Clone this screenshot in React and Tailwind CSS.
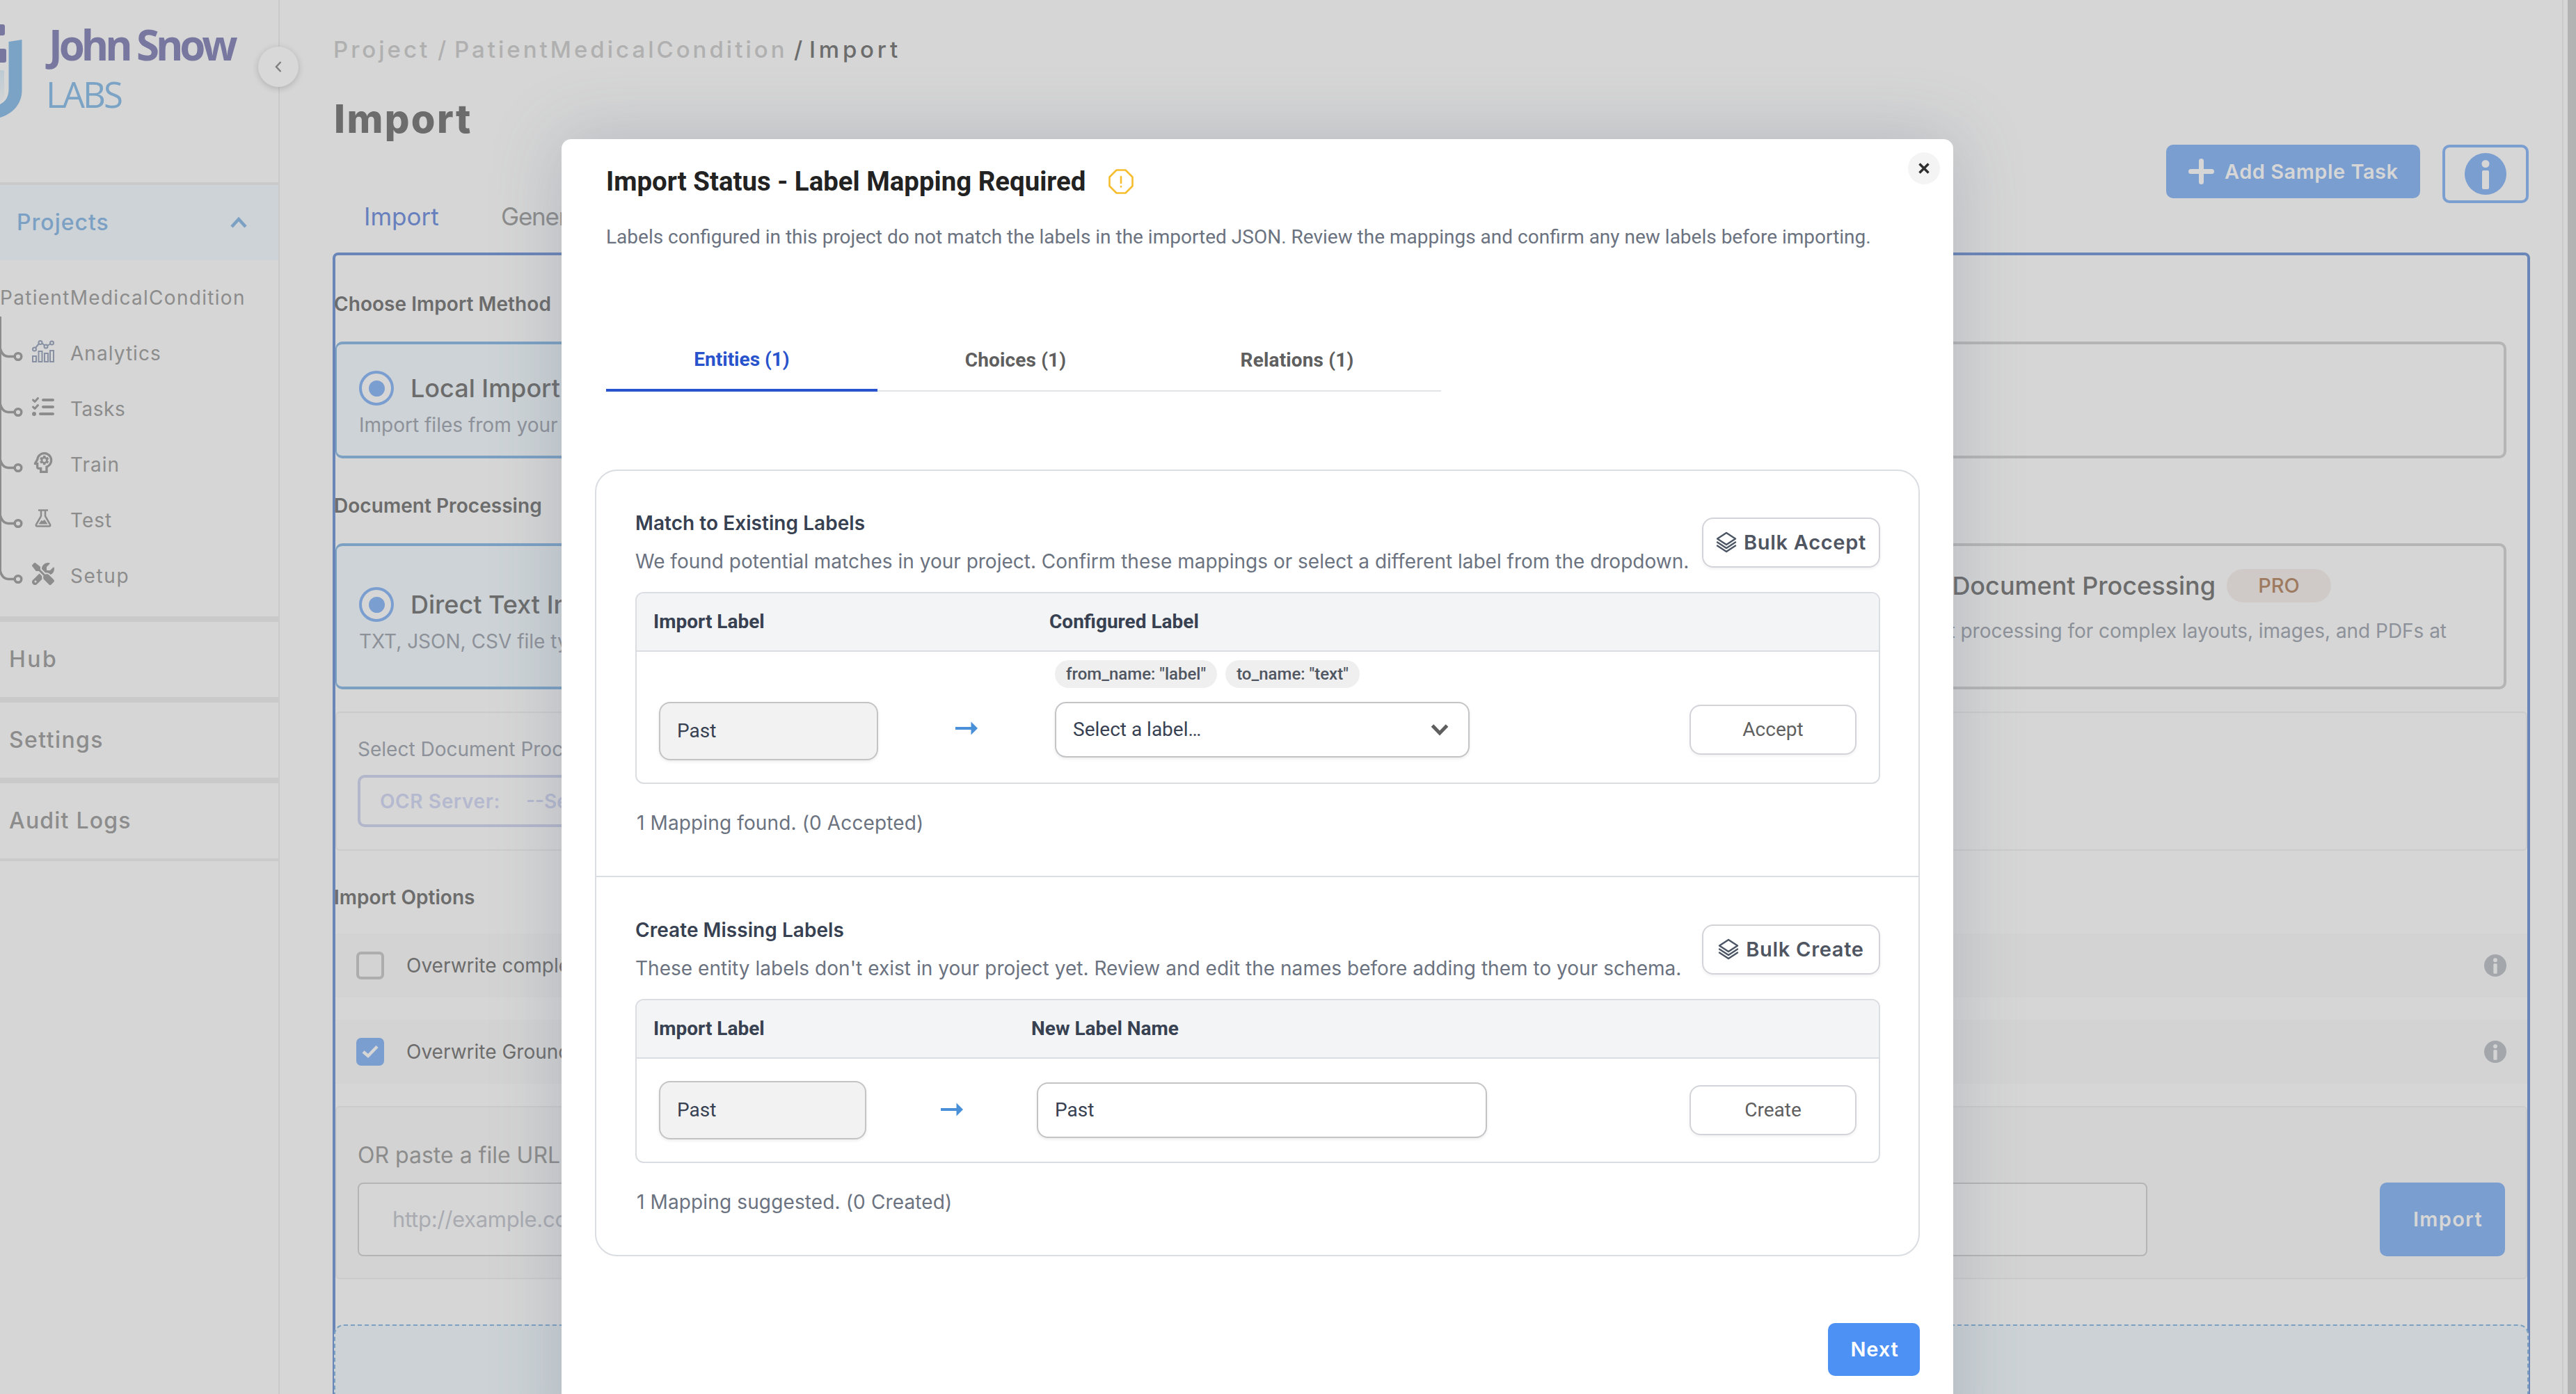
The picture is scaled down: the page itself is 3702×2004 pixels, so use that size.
import React from "react";
import clsx from "clsx";
import { FaListCheck, FaScrewdriverWrench } from "react-icons/fa6";
import { MdOutlinePsychology } from "react-icons/md";

/**
 * Import page with the "Label Mapping Required" dialog open.
 * Everything behind the dialog uses the dimmed palette.
 */

/* ---------- icons ---------- */

function AnalyticsIcon() {
  return (
    <svg viewBox="0 0 32 32" className="h-8 w-8" fill="none" stroke="#8791a3" strokeWidth="2">
      <path d="M5 11 10 5M14 4l4 3.500M22 8l5-3" />
      <circle cx="3.500" cy="13" r="2.500" />
      <circle cx="12" cy="3.500" r="2.500" />
      <circle cx="20" cy="9" r="2.500" />
      <circle cx="28.500" cy="4" r="2.500" />
      <rect x="1" y="23" width="5" height="8" />
      <rect x="9.500" y="16" width="5" height="15" />
      <rect x="18" y="19" width="5" height="12" />
      <rect x="26" y="15" width="5" height="16" />
    </svg>
  );
}

function FlaskIcon() {
  return (
    <svg viewBox="0 0 26 26" className="h-[26px] w-[26px]" fill="none" stroke="#8c8c8c" strokeWidth="2.500">
      <path d="M6 1.500h14" />
      <path d="M10 2v8L3 22q-1 2.500 1.500 2.500h17Q24 24.500 23 22L16 10V2" />
      <path d="M6.500 21.500 10.500 16l2 1 2.500-2 4.500 6.500z" fill="#8c8c8c" stroke="none" />
    </svg>
  );
}

function InfoIcon({ className, hole }) {
  return (
    <svg viewBox="0 0 60 60" className={className}>
      <circle cx="30" cy="30" r="30" fill="currentColor" />
      <circle cx="30" cy="15.500" r="5.500" fill={hole} />
      <rect x="25" y="25" width="10" height="27" rx="2" fill={hole} />
    </svg>
  );
}

function StackIcon() {
  return (
    <svg viewBox="0 0 30 32" className="h-8 w-[30px]" fill="none" stroke="#4b5563" strokeWidth="2.400" strokeLinejoin="round" strokeLinecap="round">
      <path d="M15 2 28 10.500 15 19 2 10.500z" />
      <path d="m2 15.500 13 8.500 13-8.500" />
      <path d="m2 20.500 13 8.500 13-8.500" />
    </svg>
  );
}

function ArrowIcon({ className }) {
  return (
    <svg viewBox="0 0 32 20" className={clsx("h-5 w-8 shrink-0", className)} fill="#4a90d9">
      <rect x="0" y="8" width="24" height="4" />
      <path d="M22.500 0.500 32 10l-9.500 9.500z" />
    </svg>
  );
}

function WarningIcon() {
  return (
    <svg viewBox="0 0 36 36" className="h-9 w-9" fill="none" stroke="#f6bd2e" strokeWidth="2.600" strokeLinejoin="round" strokeLinecap="round">
      <path d="M11.500 1.500h13l10 10v13l-10 10h-13l-10-10v-13z" />
      <path d="M18 11v9M18 25v.5" />
    </svg>
  );
}

/* ---------- sidebar ---------- */

const PROJECT_LINKS = [
  { label: "Analytics", tracking: "tracking-[1.05px]", icon: <AnalyticsIcon /> },
  { label: "Tasks", tracking: "tracking-[0.5px]", icon: <FaListCheck className="h-8 w-8" /> },
  { label: "Train", tracking: "tracking-[1px]", icon: <MdOutlinePsychology className="h-10 w-10" /> },
  { label: "Test", tracking: "tracking-[1px]", icon: <FlaskIcon /> },
  { label: "Setup", tracking: "tracking-[1.6px]", icon: <FaScrewdriverWrench className="h-8 w-8" /> },
];

function Logo() {
  return (
    <div className="flex h-[266px] border-b-4 border-[#cacaca]">
      <svg viewBox="0 0 66 200" className="h-[200px] w-[66px] shrink-0">
        <defs>
          <linearGradient id="logoFade" x1="0" y1="0" x2="0" y2="1">
            <stop offset="0" stopColor="#bccad3" />
            <stop offset="1" stopColor="#d3d5d6" />
          </linearGradient>
        </defs>
        <path d="M0 35h4q3 0 3 3v10q0 3-3 3H0zM0 70h6q3 0 3 3v14q0 3-3 3H0z" fill="#7777a0" />
        <path d="M0 101h6v34q0 8-6 13z" fill="url(#logoFade)" />
        <path d="M12.500 60 31.500 57v73c0 20-14 34-31.500 39v-19c8-4 12.500-11 12.500-22z" fill="#7ba3c5" />
      </svg>
      <div className="pt-[34px] font-['Open_Sans',sans-serif] leading-[60px] whitespace-nowrap">
        <div className="pl-[4px] text-[60px] font-bold tracking-[-5.1px] text-[#7777a0]">John Snow</div>
        <div className="mt-[11px] text-[51px] tracking-[-2.9px] text-[#7ba3c5]">LABS</div>
      </div>
    </div>
  );
}

function TreeBranch({ last }) {
  return (
    <svg viewBox="0 0 36 80" className="h-20 w-9 shrink-0 overflow-visible" fill="none" stroke="#8c8c8c" strokeWidth="3.500">
      <path d={last ? "M0.500 -13V34" : "M0.500 -13V80"} strokeWidth="3" />
      <path d="M0 32Q3 44.500 12 44.500H21" />
      <circle cx="26" cy="44.500" r="4.800" />
    </svg>
  );
}

function SidebarItem({ label, tracking, last }) {
  return (
    <div className={clsx("border-[#cacaca] text-[32px] font-medium", last ? "border-b-4" : "border-b-8")}>
      <div className={clsx("flex h-[108px] items-center pl-[13px]", tracking)}>{label}</div>
    </div>
  );
}

function Sidebar() {
  return (
    <aside className="relative w-[402px] shrink-0 border-r-2 border-[#cacaca] text-[#8c8c8c]">
      <Logo />
      <button className="absolute top-[67px] left-[371px] flex h-[58px] w-[58px] items-center justify-center rounded-full bg-[#d8d8d8] shadow-[0_2px_10px_rgba(0,0,0,0.18)]">
        <svg viewBox="0 0 10 16" className="h-4 w-[10px]" fill="none" stroke="#808080" strokeWidth="2.500">
          <path d="M8.500 1 2 8l6.500 7" />
        </svg>
      </button>

      <div className="flex h-[108px] items-center justify-between bg-[#cdd3d6] pr-[45px] pl-[24px] text-[32px] font-medium tracking-[1px] text-[#7ba0c4]">
        Projects
        <svg viewBox="0 0 24 16" className="h-4 w-6" fill="none" stroke="#7ba0c4" strokeWidth="4.500">
          <path d="M2 14 12 3l10 11" />
        </svg>
      </div>

      <div className="flex h-[94px] items-center pt-[14px] text-[28px] tracking-[1.3px]">PatientMedicalCondition</div>
      <nav className="mb-[18px] text-[28px]">
        {PROJECT_LINKS.map((link, i) => (
          <div key={link.label} className="flex h-20 items-center">
            <TreeBranch last={i === PROJECT_LINKS.length - 1} />
            <span className="mr-[18px] ml-[5px] flex w-[42px] -translate-y-[3px] justify-center">{link.icon}</span>
            <span className={link.tracking}>{link.label}</span>
          </div>
        ))}
      </nav>

      <div className="border-t-8 border-[#cacaca]">
        <SidebarItem label="Hub" tracking="tracking-[2.4px]" />
        <SidebarItem label="Settings" tracking="tracking-[1.4px]" />
        <SidebarItem label="Audit Logs" tracking="tracking-[1.2px]" last />
      </div>
    </aside>
  );
}

/* ---------- import page ---------- */

function SectionTitle({ className, children }) {
  return (
    <h2 className={clsx("-ml-[2px] flex items-center text-[28px] font-semibold tracking-[0.05px] text-[#6c6c6c]", className)}>
      {children}
    </h2>
  );
}

function RadioCard({ title, text, className }) {
  return (
    <div className={clsx("rounded-[10px] border-4 border-l-2 border-[#7ba0c2] bg-[#cdd3d6] pl-8", className)}>
      <div className="flex h-[50px] items-center gap-[24px] text-[36px] font-medium text-[#6c6c6c]">
        <span className="flex h-[50px] w-[50px] items-center justify-center rounded-full border-4 border-[#7b9ed0] bg-[#d6d6d6]">
          <span className="h-[23px] w-[23px] rounded-full bg-[#7b9ed0]" />
        </span>
        {title}
      </div>
      <p className="mt-[11px] text-[28px] leading-[35px] text-[#8d9199]">{text}</p>
    </div>
  );
}

function OptionRow({ label, checked }) {
  return (
    <div className="flex h-[92px] items-center bg-[#d3d3d3] px-[30px] text-[28px] text-[#6c6c6c]">
      {checked ? (
        <span className="flex h-10 w-10 items-center justify-center rounded-[7px] bg-[#7b9ed0]">
          <svg viewBox="0 0 24 20" className="h-5 w-6" fill="none" stroke="#d6d6d6" strokeWidth="4.500">
            <path d="m2 10 7 6L22 2.500" />
          </svg>
        </span>
      ) : (
        <span className="h-10 w-10 rounded-[7px] border-4 border-[#adadad]" />
      )}
      <span className="ml-8 flex-1">{label}</span>
      <InfoIcon className="h-8 w-8 text-[#a3a6ab]" hole="#d3d3d3" />
    </div>
  );
}

function PageHeader() {
  return (
    <header className="flex h-[363px] justify-between pr-[2px]">
      <div>
        <div className="flex h-[143px] items-center text-[33px] font-medium whitespace-nowrap text-[#b0b0b0]">
          <span className="w-[151px] pl-[1px] tracking-[4px]">Project</span>
          <span className="w-[24px]">/</span>
          <span className="w-[488px] tracking-[4px]">PatientMedicalCondition</span>
          <span className="w-[22px] text-[#6c6c6c]">/</span>
          <span className="tracking-[4.8px] text-[#6c6c6c]">Import</span>
        </div>
        <h1 className="mt-[-2px] flex h-[60px] items-center pl-[2px] text-[56px] font-extrabold tracking-[2.4px] text-[#6c6c6c]">Import</h1>
        <div className="mt-[75px] flex h-[70px] items-center text-[35px] whitespace-nowrap text-[#8c8c8c]">
          <span className="w-[196px] pl-[45px] text-[#6780bd]">Import</span>
          <span className="ml-[46px] tracking-[-1.2px]">Generate</span>
        </div>
      </div>
      <div className="flex items-start gap-8 pt-[208px]">
        <button className="flex h-[77px] w-[365px] items-center rounded-[10px] bg-[#7b9ed0] pl-8 text-[29px] font-semibold tracking-[0.5px] text-[#d6d6d6]">
          <svg viewBox="0 0 37 37" className="mr-[15px] h-[37px] w-[37px]" fill="none" stroke="currentColor" strokeWidth="7" strokeLinecap="round">
            <path d="M18.500 3.500v30M3.500 18.500h30" />
          </svg>
          Add Sample Task
        </button>
        <button className="flex h-[84px] w-[124px] items-center justify-center rounded-[10px] border-4 border-[#7b9ed0]">
          <InfoIcon className="h-[60px] w-[60px] text-[#7b9ed0]" hole="#d6d6d6" />
        </button>
      </div>
    </header>
  );
}

function ImportPanel() {
  return (
    <section className="h-[1700px] rounded-t-[8px] border-4 border-[#6a85b8]">
      <SectionTitle className="h-[124px] pt-4">Choose Import Method</SectionTitle>
      <div className="mr-[30px] grid grid-cols-2 gap-6">
        <RadioCard className="h-[168px] pt-[38px]" title="Local Import" text="Import files from your computer" />
        <div className="h-[168px] rounded-[10px] border-4 border-[#b5b5b5]" />
      </div>

      <SectionTitle className="h-[122px] pt-[14px]">Document Processing</SectionTitle>
      <div className="mr-[30px] grid grid-cols-2 gap-6">
        <RadioCard className="h-[210px] pt-[59px]" title="Direct Text Import" text="TXT, JSON, CSV file types" />
        <div className="h-[210px] rounded-[10px] border-4 border-[#b5b5b5] pt-[32px] whitespace-nowrap">
          <div className="flex h-[50px] items-center justify-end gap-4 pr-[248px] text-[36px] font-medium text-[#6c6c6c]">
            Visual Document Processing
            <span className="flex h-12 w-[150px] items-center justify-center rounded-full bg-[#cfcac7] text-[29px] text-[#9e7a60]">PRO</span>
          </div>
          <p className="mt-[23px] pr-[82px] text-right text-[28px] leading-[35px] tracking-[-0.03px] text-[#8d9199]">
            Document processing for complex layouts, images, and PDFs at
          </p>
        </div>
      </div>

      <div className="mt-8 h-[200px] rounded-[6px] border-2 border-[#cbcbcb] px-[30px] pt-8">
        <div className="flex h-10 items-center text-[28px] text-[#8d9199]">Select Document Processor</div>
        <div className="mt-[17px] flex h-[75px] w-[760px] items-center rounded-[10px] border-4 border-[#b3b7cb] pl-[28px] text-[28px] font-semibold tracking-[0.6px] text-[#b5b9cf]">
          <span className="w-[210px]">OCR Server:</span>
          <span className="tracking-normal">--Select--</span>
        </div>
      </div>

      <SectionTitle className="h-[119px] pt-[14px]">Import Options</SectionTitle>
      <div className="flex flex-col gap-8">
        <OptionRow label="Overwrite completions" />
        <OptionRow label="Overwrite Ground Truth" checked />
      </div>

      <div className="mt-8 h-[249px] rounded-[6px] border-2 border-[#cbcbcb] bg-[#d3d3d3] px-[30px] pt-[49px]">
        <div className="flex h-10 items-center text-[32px] text-[#8c8c8c]">OR paste a file URL</div>
        <div className="mt-[19px] flex justify-between">
          <div className="flex h-[106px] w-[2572px] items-center rounded-[8px] border-2 border-[#b5b5b5] bg-[#d6d6d6] pl-[48px] text-[31px] tracking-[-0.3px] text-[#a9abb1]">
            http://example.com/file
          </div>
          <button className="flex h-[106px] w-[180px] items-center rounded-[10px] bg-[#7b9ed0] pl-[48px] text-[29px] font-semibold tracking-[1.3px] text-[#d6d6d6]">
            Import
          </button>
        </div>
      </div>

      <div className="-mx-[2px] mt-[65px] h-[200px] rounded-[14px] border-2 border-dashed border-[#7ba0c2] bg-[#ccd2d5]" />
    </section>
  );
}

/* ---------- mapping dialog ---------- */

const TABS = [
  { label: "Entities (1)", className: "w-[390px] border-b-4 border-[#2853cc] pt-[5px] text-[#2853cc]" },
  { label: "Choices (1)", className: "w-[396px] border-b-2 border-[#e1e5e8] pt-[6px] pl-[1px] text-[#5f5f5f] tracking-[0.15px]" },
  { label: "Relations (1)", className: "w-[414px] border-b-2 border-[#e1e5e8] pt-[6px] text-[#5f5f5f] tracking-[0.15px]" },
];

function SectionHeader({ title, text, action, tracking }) {
  return (
    <div className="flex h-[116px] items-start justify-between whitespace-nowrap">
      <div>
        <h3 className="text-[28px] leading-[34px] font-semibold tracking-[0.05px] text-[#374151]">{title}</h3>
        <p className={clsx("mt-[21px] text-[28px] leading-[34px] text-[#6b7280]", tracking)}>{text}</p>
      </div>
      <button className="mt-[9px] flex h-[72px] w-[256px] items-center justify-center gap-[10px] rounded-[16px] border-2 border-[#d3d4d9] text-[29px] font-semibold tracking-[0.7px] text-[#4f5561] shadow-[0_2px_4px_rgba(0,0,0,0.06)]">
        <StackIcon />
        {action}
      </button>
    </div>
  );
}

function TableHead({ first, second, firstClass }) {
  return (
    <div className="flex h-[84px] items-center rounded-t-[10px] border-b-2 border-[#dadde1] bg-[#f3f4f6] pl-[24px] font-[Roboto,sans-serif] text-[28px] font-bold text-[#374151]">
      <span className={firstClass}>{first}</span>
      <span>{second}</span>
    </div>
  );
}

function Field({ className, children }) {
  return (
    <div className={clsx("flex items-center rounded-[16px] border-2 border-[#c3c4c6] pl-[24px] font-[Roboto,sans-serif] text-[28px] text-[#374151] shadow-[0_2px_4px_rgba(0,0,0,0.08)]", className)}>
      {children}
    </div>
  );
}

function RowButton({ className, children }) {
  return (
    <button className={clsx("mr-8 ml-auto flex h-[72px] w-[240px] items-center justify-center rounded-[16px] border-2 border-[#d3d4d9] font-[Roboto,sans-serif] text-[28px] text-[#5f5f5f] shadow-[0_2px_4px_rgba(0,0,0,0.06)]", className)}>
      {children}
    </button>
  );
}

function Chip({ children }) {
  return (
    <span className="flex h-10 items-center rounded-full bg-[#efefef] px-4 font-[Roboto,sans-serif] text-[24px] font-medium text-[#4f5561]">
      {children}
    </span>
  );
}

function MatchSection() {
  return (
    <div className="h-[584px] border-b-2 border-[#dadde1] pt-[58px] pr-[55px] pl-[56px]">
      <SectionHeader
        title="Match to Existing Labels"
        text="We found potential matches in your project. Confirm these mappings or select a different label from the dropdown."
        action="Bulk Accept"
      />
      <div className="h-[276px] rounded-[12px] border-2 border-[#dadde1]">
        <TableHead first="Import Label" second="Configured Label" firstClass="w-[569px]" />
        <div className="flex items-start">
          <Field className="mt-[72px] ml-8 h-[84px] w-[315px] bg-[#f2f2f2]">Past</Field>
          <ArrowIcon className="mt-[100px] ml-[111px]" />
          <div className="ml-[111px] pt-3">
            <div className="flex gap-3">
              <Chip>from_name: "label"</Chip>
              <Chip>to_name: "text"</Chip>
            </div>
            <Field className="mt-5 h-20 w-[596px] justify-between bg-white pr-[28px]">
              Select a label…
              <svg viewBox="0 0 26 18" className="h-[18px] w-[26px]" fill="none" stroke="#5f5f5f" strokeWidth="5">
                <path d="m2.500 3 10.500 11L23.500 3" />
              </svg>
            </Field>
          </div>
          <RowButton className="mt-[76px]">Accept</RowButton>
        </div>
      </div>
      <p className="mt-[39px] pl-[2px] text-[28px] leading-[34px] tracking-[0.13px] text-[#6b7280]">1 Mapping found. (0 Accepted)</p>
    </div>
  );
}

function CreateSection() {
  return (
    <div className="pt-[59px] pr-[55px] pl-[56px]">
      <SectionHeader
        title="Create Missing Labels"
        text="These entity labels don't exist in your project yet. Review and edit the names before adding them to your schema."
        action="Bulk Create"
        tracking="tracking-[0.03px]"
      />
      <div className="h-[236px] rounded-[12px] border-2 border-[#dadde1]">
        <TableHead first="Import Label" second="New Label Name" firstClass="w-[543px]" />
        <div className="flex h-[148px] items-center">
          <Field className="ml-8 h-[84px] w-[298px] bg-[#f2f2f2]">Past</Field>
          <ArrowIcon className="mb-[3px] ml-[107px]" />
          <Field className="ml-[106px] h-20 w-[647px] bg-white">Past</Field>
          <RowButton>Create</RowButton>
        </div>
      </div>
      <p className="mt-[39px] pl-[2px] text-[28px] leading-[34px] tracking-[0.13px] text-[#6b7280]">1 Mapping suggested. (0 Created)</p>
    </div>
  );
}

function MappingDialog() {
  return (
    <div className="absolute top-[200px] left-[807px] h-[1900px] w-[2000px] rounded-[14px] bg-white pl-[48px] shadow-[0_0_100px_rgba(90,105,130,0.28)]">
      <button className="absolute top-[19px] right-[19px] flex h-[46px] w-[46px] items-center justify-center rounded-full bg-[#f4f4f4]">
        <svg viewBox="0 0 16 16" className="h-4 w-4" fill="none" stroke="#2f2f2f" strokeWidth="3.500">
          <path d="m1.500 1.500 13 13M14.500 1.500l-13 13" />
        </svg>
      </button>

      <div className="pl-[16px] font-[Roboto,sans-serif] whitespace-nowrap">
        <h2 className="flex h-[121px] items-center gap-[33px] text-[38.4px] font-bold text-[#222222]">
          Import Status - Label Mapping Required
          <WarningIcon />
        </h2>
        <p className="pt-px text-[28px] leading-[38px] text-[#6b7280]">
          Labels configured in this project do not match the labels in the imported JSON. Review the mappings and confirm any new labels before importing.
        </p>
        <div className="mt-[109px] flex text-[28px] font-bold">
          {TABS.map((tab) => (
            <div key={tab.label} className={clsx("flex h-[94px] items-center justify-center", tab.className)}>
              {tab.label}
            </div>
          ))}
        </div>
      </div>

      <div className="mt-[112px] h-[1131px] w-[1904px] rounded-[32px] border-2 border-[#dadde1]">
        <MatchSection />
        <CreateSection />
      </div>

      <div className="mt-24 flex w-[1904px] justify-end">
        <button className="flex h-[76px] w-[132px] items-center justify-center rounded-[10px] bg-[#4d91f5] pl-[2px] text-[29px] font-semibold tracking-[0.8px] text-white">
          Next
        </button>
      </div>
    </div>
  );
}

export default function App() {
  return (
    <div className="relative flex h-[2004px] w-[3702px] overflow-hidden bg-[#d6d6d6] font-[Inter,sans-serif]">
      <Sidebar />
      <main className="flex-1 border-r-2 border-[#cbcbcb] pr-[46px] pl-[76px]">
        <PageHeader />
        <ImportPanel />
      </main>
      <div className="ml-[6px] w-3 shrink-0 bg-[#b3b3b3]" />
      <MappingDialog />
    </div>
  );
}
